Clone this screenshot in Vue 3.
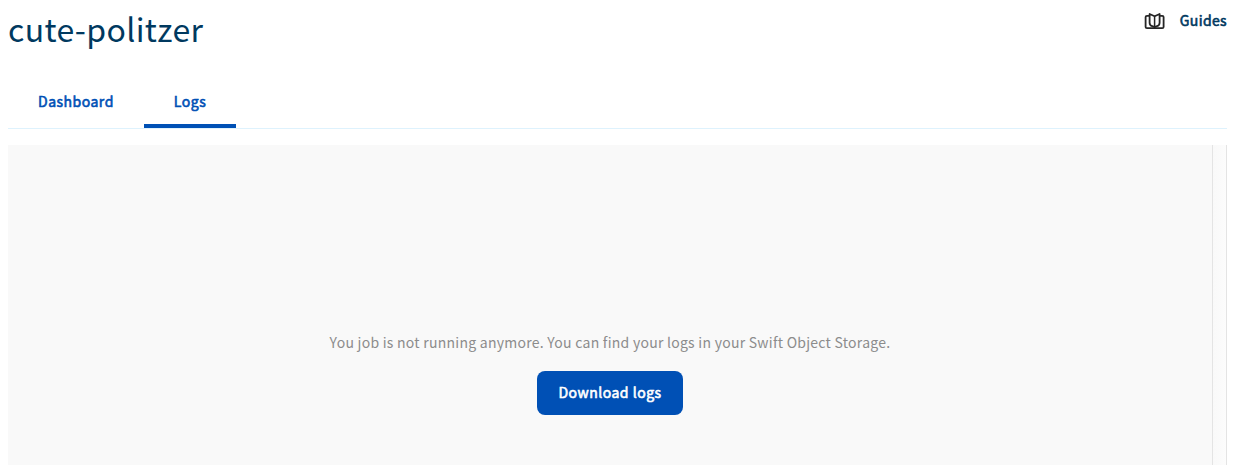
<script setup>
import { ref } from 'vue'

const tabs = ['Dashboard', 'Logs']
const active = ref('Logs')
</script>

<template>
  <main class="page">
    <header class="header">
      <h1 class="title">cute-politzer</h1>
      <a class="guides">
        <svg class="guides-icon" viewBox="0 0 22 18" fill="none" stroke="currentColor" stroke-width="1.8" stroke-linejoin="round" stroke-linecap="round">
          <path d="M4.6 3.8H3Q1.6 3.8 1.6 5V15Q1.6 16.2 3 16.2H18.2Q19.6 16.2 19.6 15V5Q19.6 3.8 18.2 3.8H16.6" />
          <path d="M10.6 4.2 5.6 2V10.8Q5.6 13.6 8.2 14.2L10.6 15.2 13 14.2Q15.6 13.6 15.6 10.8V2L10.6 4.2" />
          <path d="M10.6 4.4V14.5" stroke-width="1.5" />
        </svg>
        <span class="guides-label">Guides</span>
      </a>
    </header>
    <nav class="tabs">
      <button v-for="tab in tabs" :key="tab" class="tab" :class="{ active: tab === active }" @click="active = tab">
        <span class="tab-label">{{ tab }}</span>
      </button>
    </nav>
    <section class="logs">
      <div class="content">
        <p class="message">You job is not running anymore. You can find your logs in your Swift Object Storage.</p>
        <button class="download">Download logs</button>
      </div>
      <div class="gutter"></div>
    </section>
  </main>
</template>

<style>
body {
  background: #fff;
}
</style>

<style scoped>
.page {
  height: 465px;
  padding: 0 25px 0 8px;
  box-sizing: border-box;
  display: flex;
  flex-direction: column;
  overflow: hidden;
  font-family: "Noto Sans CJK SC", "Noto Sans", sans-serif;
}
.header {
  height: 76px;
  display: flex;
  justify-content: space-between;
  align-items: flex-start;
}
.title {
  margin: 0;
  padding-top: 3px;
  font-size: 32px;
  line-height: 50px;
  font-weight: 400;
  letter-spacing: 0.36px;
  color: #00395f;
}
.guides {
  display: flex;
  align-items: center;
  height: 42px;
  color: #00395f;
}
.guides-icon {
  width: 22px;
  height: 18px;
  margin-right: 14px;
  color: #252525;
}
.guides-label,
.tab,
.download {
  font: 400 14px/40px "Noto Sans CJK SC", "Noto Sans", sans-serif;
  letter-spacing: 0.5px;
  -webkit-text-stroke: 0.6px currentColor;
}
.guides-label {
  height: 42px;
  letter-spacing: 0.36px;
}
.tabs {
  height: 52px;
  display: flex;
  border-bottom: 1px solid #def2fd;
}
.tab {
  border: 0;
  border-bottom: 4px solid transparent;
  background: none;
  padding: 2px 30px 0;
  line-height: 46px;
  color: #0050b5;
}
.tab.active {
  border-bottom-color: #0050b5;
}
.logs {
  flex: 1;
  margin-top: 16px;
  display: flex;
  background: #f9f9f9;
}
.content {
  flex: 1;
  display: flex;
  flex-direction: column;
  align-items: center;
  padding-top: 185px;
}
.message {
  margin: 0;
  font-size: 14px;
  line-height: 24px;
  letter-spacing: 0.26px;
  color: #8c8c8c;
}
.download {
  margin-top: 17px;
  width: 146px;
  height: 44px;
  padding: 0 0 2px;
  border: 0;
  border-radius: 8px;
  background: #0050b5;
  color: #fff;
  line-height: 42px;
}
.gutter {
  width: 13px;
  border-left: 1px solid #e4e4e4;
  border-right: 1px solid #e4e4e4;
  background: linear-gradient(to right, #f9f9f9, #fcfcfc);
}
</style>
